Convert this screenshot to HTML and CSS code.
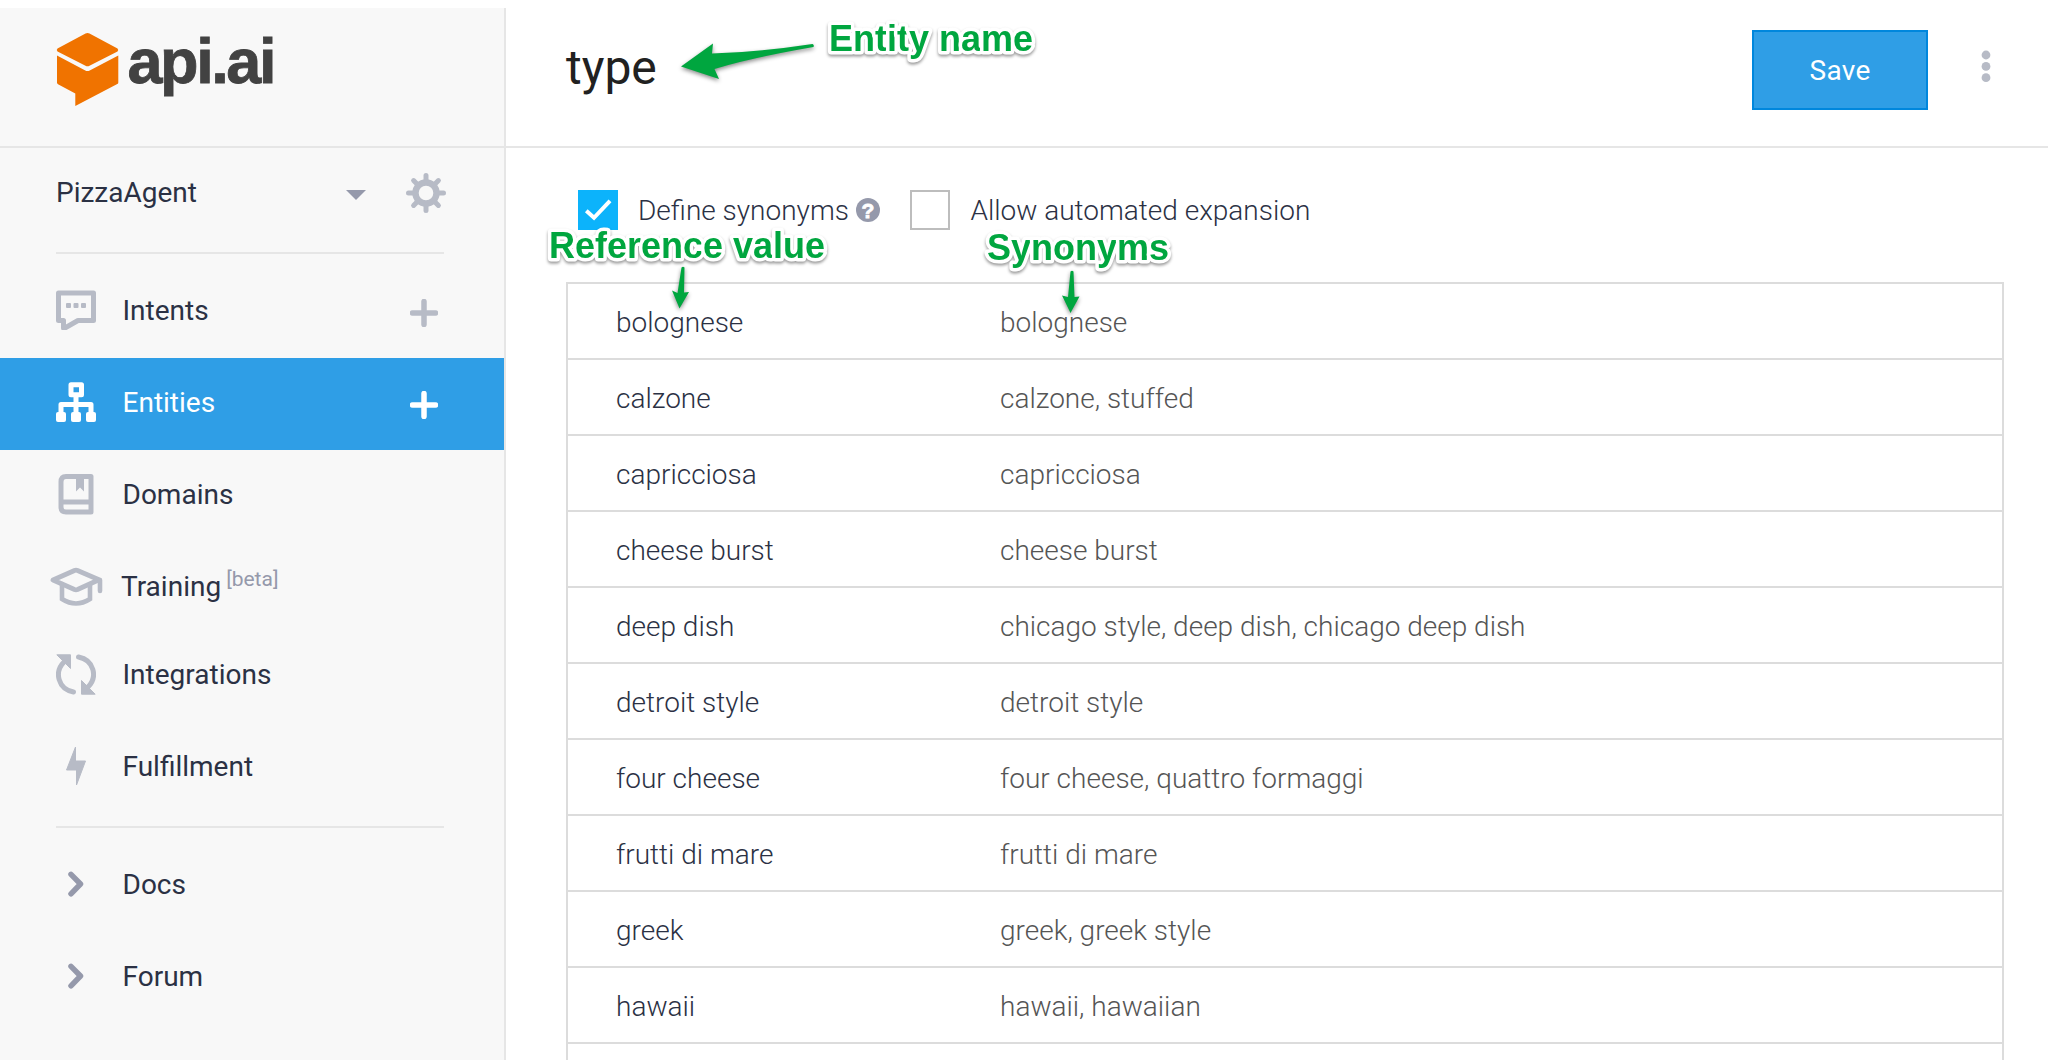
FILE: index.html
```html
<!DOCTYPE html>
<html lang="en">
<head>
<meta charset="utf-8">
<title>api.ai – Entity</title>
<link rel="stylesheet" href="styles.css">
</head>
<body>
<div class="app">
  <aside class="sidebar">
    <div class="brand">
      <svg class="logo" width="280" height="138" viewBox="0 8 280 138" role="img" aria-label="api.ai">
        <path fill="#f07300" d="M85.500 33.500q2-1.200 4 0L117.500 48.400q1.500 1.600 0 3.200L89.500 65.800q-2 1-4 0L57.500 51.600q-1.500-1.600 0-3.200z"/>
        <path fill="#f07300" d="M57 55.500 85.300 70.400q2.200 1 4.400 0L118.300 55.500V82.500q0 1-1 1.600L75.300 106V93.500L58 84.300q-1-.7-1-1.800z"/>
        <text class="logo-text" x="127.500" y="83.300" textLength="149" lengthAdjust="spacing">api.ai</text>
      </svg>
    </div>
    <div class="agent">
      <span class="agent-name">PizzaAgent</span>
      <svg class="caret" width="20" height="10"><path d="M0 0H20L10 10z"/></svg>
      <svg class="gear" width="40" height="40" viewBox="-20 -20 40 40">
        <g fill="none" stroke="#b7bbc6">
          <circle r="10.500" stroke-width="6.400"/>
          <path stroke-width="5" stroke-linecap="round" d="M0-12V-17.500M0 12V17.500M-12 0H-17.500M12 0H17.500M8.500-8.500 12.400-12.400M-8.500-8.500-12.400-12.400M8.500 8.500 12.400 12.400M-8.500 8.500-12.400 12.400"/>
        </g>
      </svg>
    </div>
    <hr class="rule">
    <nav class="nav">
      <a class="item">
        <span class="icon"><svg width="40" height="40"><path fill="none" stroke="#b7bbc6" stroke-width="5" stroke-linejoin="round" d="M2.500 3h35v27.500H22L9 38H7.500V30.500h-5z"/><g fill="#b7bbc6"><rect x="10" y="13" width="5" height="5" rx="1"/><rect x="17.500" y="13" width="5" height="5" rx="1"/><rect x="25" y="13" width="5" height="5" rx="1"/></g></svg></span>
        <span class="label">Intents</span>
        <svg class="plus" width="28" height="28"><path d="M14 2.500V25.500M2.500 14H25.500"/></svg>
      </a>
      <a class="item active">
        <span class="icon"><svg width="40" height="40"><path fill="none" stroke="#fff" stroke-width="5" stroke-linejoin="round" d="M15 2.800H25.500V12.800H15zM20 13V32M5 32V22.500H35V32"/><g fill="#fff"><rect y="30" width="10" height="10" rx="2"/><rect x="15" y="30" width="10" height="10" rx="2"/><rect x="30" y="30" width="10" height="10" rx="2"/></g></svg></span>
        <span class="label">Entities</span>
        <svg class="plus" width="28" height="28"><path d="M14 2.500V25.500M2.500 14H25.500"/></svg>
      </a>
      <a class="item">
        <span class="icon"><svg width="36" height="42" viewBox="0 -1 36 42"><path fill="none" stroke="#b7bbc6" stroke-width="5" stroke-linejoin="round" d="M8 2.500H33V38H8Q3 38 3 33V8Q3 2.500 8 2.500zM3 28H33"/><path fill="#b7bbc6" d="M18 3h8v14.500L22 13.500 18 17.500z"/></svg></span>
        <span class="label">Domains</span>
      </a>
      <a class="item training">
        <span class="icon"><svg width="54" height="40"><path fill="none" stroke="#b7bbc6" stroke-width="4.800" stroke-linejoin="round" d="M4 14 25.500 4.500q1.500-.6 3 0L50 13.800 28.500 23.500q-1.500.6-3 0z"/><path fill="none" stroke="#b7bbc6" stroke-width="4.600" stroke-linecap="round" d="M13 18V33Q27 42 41 33V18M51 14V25"/></svg></span>
        <span class="label">Training<span class="beta">[beta]</span></span>
      </a>
      <a class="item">
        <span class="icon"><svg width="40" height="42" viewBox="0 -1 40 42"><path fill="none" stroke="#b7bbc6" stroke-width="5" stroke-linecap="round" d="M8 8C-2 18 2 35 17.500 38M22.500 3C38 6 42 23 32 33"/><path fill="#b7bbc6" stroke="#b7bbc6" stroke-linejoin="round" d="M.8.800H14.500V14.500zM39.200 40.200H25.500V26.500z"/></svg></span>
        <span class="label">Integrations</span>
      </a>
      <a class="item">
        <span class="icon"><svg width="20" height="42" viewBox="0 -.5 20 42"><path fill="#b7bbc6" stroke="#b7bbc6" stroke-linejoin="round" d="M9.500 1.500V15.500H19.500L10.500 39.500V24.500H.5z"/></svg></span>
        <span class="label">Fulfillment</span>
      </a>
    </nav>
    <hr class="rule rule-low">
    <nav class="nav">
      <a class="item"><span class="icon"><svg width="16" height="26"><path class="chev" d="M3 3.300 12.500 13 3 22.800"/></svg></span><span class="label">Docs</span></a>
      <a class="item"><span class="icon"><svg width="16" height="26"><path class="chev" d="M3 3.300 12.500 13 3 22.800"/></svg></span><span class="label">Forum</span></a>
    </nav>
  </aside>

  <main class="main">
    <header class="header">
      <h1 class="title">type</h1>
      <button class="save">Save</button>
      <svg class="more" width="10" height="34"><circle cx="5" cy="5" r="4.400"/><circle cx="5" cy="16.400" r="4.400"/><circle cx="5" cy="27.700" r="4.400"/></svg>
    </header>
    <section class="options">
      <span class="box checked"><svg width="40" height="40"><path fill="none" stroke="#fff" stroke-width="4" d="M8.300 20.800 16 27.800 32 10.800"/></svg></span>
      <span class="opt-label">Define synonyms</span>
      <svg class="help" width="24" height="24"><circle cx="12" cy="12" r="12" fill="#9599ab"/><text x="12" y="19.500" text-anchor="middle">?</text></svg>
      <span class="box"></span>
      <span class="opt-label">Allow automated expansion</span>
    </section>
    <div class="table">
      <div class="row"><span class="ref">bolognese</span><span class="syn">bolognese</span></div>
      <div class="row"><span class="ref">calzone</span><span class="syn">calzone, stuffed</span></div>
      <div class="row"><span class="ref">capricciosa</span><span class="syn">capricciosa</span></div>
      <div class="row"><span class="ref">cheese burst</span><span class="syn">cheese burst</span></div>
      <div class="row"><span class="ref">deep dish</span><span class="syn">chicago style, deep dish, chicago deep dish</span></div>
      <div class="row"><span class="ref">detroit style</span><span class="syn">detroit style</span></div>
      <div class="row"><span class="ref">four cheese</span><span class="syn">four cheese, quattro formaggi</span></div>
      <div class="row"><span class="ref">frutti di mare</span><span class="syn">frutti di mare</span></div>
      <div class="row"><span class="ref">greek</span><span class="syn">greek, greek style</span></div>
      <div class="row"><span class="ref">hawaii</span><span class="syn">hawaii, hawaiian</span></div>
    </div>
  </main>
</div>

<svg class="notes" width="2048" height="1060">
  <g class="arrows">
    <path d="M681 66.500 713 43.500 712 53.500Q765 51.500 812.500 44q2 1 1 3Q750 58 714.500 69L719 79z"/>
    <path d="M681.500 267.500q1.500-1.500 3 0L684 292.500 689 292 679.500 308.500 672 290.500 677.500 293z"/>
    <path d="M1070.500 271.500q1.500-1.500 3 0L1074.500 297 1079.500 296.500 1070.500 313 1062 295.500 1068 297z"/>
  </g>
  <text x="829" y="51" textLength="204">Entity name</text>
  <text x="549" y="258" textLength="276">Reference value</text>
  <text x="987" y="260" textLength="182">Synonyms</text>
</svg>
</body>
</html>
```

FILE: styles.css
```css
* { box-sizing: border-box; }
body {
  margin: 0;
  background: #fff;
  color: #2b3144;
  font-family: Roboto, "Liberation Sans", sans-serif;
  font-size: 28px;
  line-height: 34px;
  height: 1060px;
  overflow: hidden;
}
svg { display: block; flex: none; }
.app { display: flex; height: 1060px; padding-top: 8px; overflow: hidden; }

.sidebar {
  width: 506px;
  flex: none;
  background: #f8f8f8;
  border-right: 2px solid #e6e6e6;
}
.brand { height: 140px; border-bottom: 2px solid #e6e6e6; }
.logo-text {
  font: bold 63px "Liberation Sans", Arial, sans-serif;
  fill: #424242;
  stroke: #424242;
  stroke-width: .8px;
}
.agent {
  display: flex;
  align-items: center;
  height: 104px;
  padding: 0 58px 14px 56px;
}
.agent-name { flex: 1; }
.caret { fill: #9599ab; margin: 4px 40px 0 0; }
.rule { height: 2px; margin: 0 60px 12px 56px; border: 0; background: #e6e6e6; }
.rule-low { margin-top: 12px; }
.item {
  display: flex;
  align-items: center;
  height: 92px;
  padding: 0 66px 4px 42px;
}
.icon {
  width: 68px;
  display: flex;
  justify-content: center;
}
.label { flex: 1; padding: 2px 0 0 12.500px; }
.training { height: 88px; padding-bottom: 0; }
.training .label { padding: 1px 0 0 11px; }
.plus { margin-top: 6px; fill: none; stroke: #b7bbc6; stroke-width: 5.500; stroke-linecap: round; }
.active { background: #2f9ee6; color: #fff; }
.active .plus { stroke: #fff; }
.beta { color: #9599ab; font-size: 21px; vertical-align: 10px; line-height: 1; margin-left: 5px; }
.chev { fill: none; stroke: #9599ab; stroke-width: 5.500; stroke-linecap: round; stroke-linejoin: round; }

.main { flex: 1; min-width: 0; }
.header {
  display: flex;
  height: 140px;
  padding: 22px 57px 0 60px;
  border-bottom: 2px solid #e6e6e6;
}
.title { flex: 1; margin: 8px 0 0; font-size: 48px; line-height: 60px; font-weight: 400; color: #212121; }
.save {
  width: 176px;
  height: 80px;
  padding: 1px 0 0;
  border: 2px solid #0087dd;
  background: #2f9ee6;
  color: #fff;
  font: inherit;
  letter-spacing: .3px;
}
.more { margin: 20px 0 0 53px; fill: #b7bbc6; }

.options {
  display: flex;
  align-items: center;
  height: 134px;
  padding: 0 0 10px 72px;
  font-weight: 300;
}
.box { width: 40px; height: 40px; flex: none; border: 2px solid #bdbdbd; }
.checked { border: 0; background: #0cb3fb; }
.opt-label { margin-left: 20px; padding-top: 1px; white-space: nowrap; }
.help { margin: 0 30.500px 0 7px; }
.help text { font: bold 21px "Liberation Sans", sans-serif; fill: #fff; stroke: #fff; stroke-width: .8px; }

.table {
  width: 1438px;
  height: 800px;
  margin-left: 60px;
  border: 2px solid #dcdcdc;
  font-weight: 300;
}
.row {
  display: grid;
  grid-template-columns: 384px 1fr;
  align-items: center;
  height: 76px;
  padding: 4px 0 0 48px;
  border-bottom: 2px solid #dcdcdc;
}
.syn { color: #555; }

.notes { position: absolute; left: 0; top: 0; pointer-events: none; }
.arrows { fill: #00a63f; filter: drop-shadow(0 2px 2px rgba(0, 0, 0, .45)); }
.notes text {
  font: bold 36px "Liberation Sans", Arial, sans-serif;
  fill: #00a63f;
  stroke: #fff;
  stroke-width: 7px;
  stroke-linejoin: round;
  paint-order: stroke;
  filter: drop-shadow(0 2px 1.500px rgba(0, 0, 0, .4));
}
```
